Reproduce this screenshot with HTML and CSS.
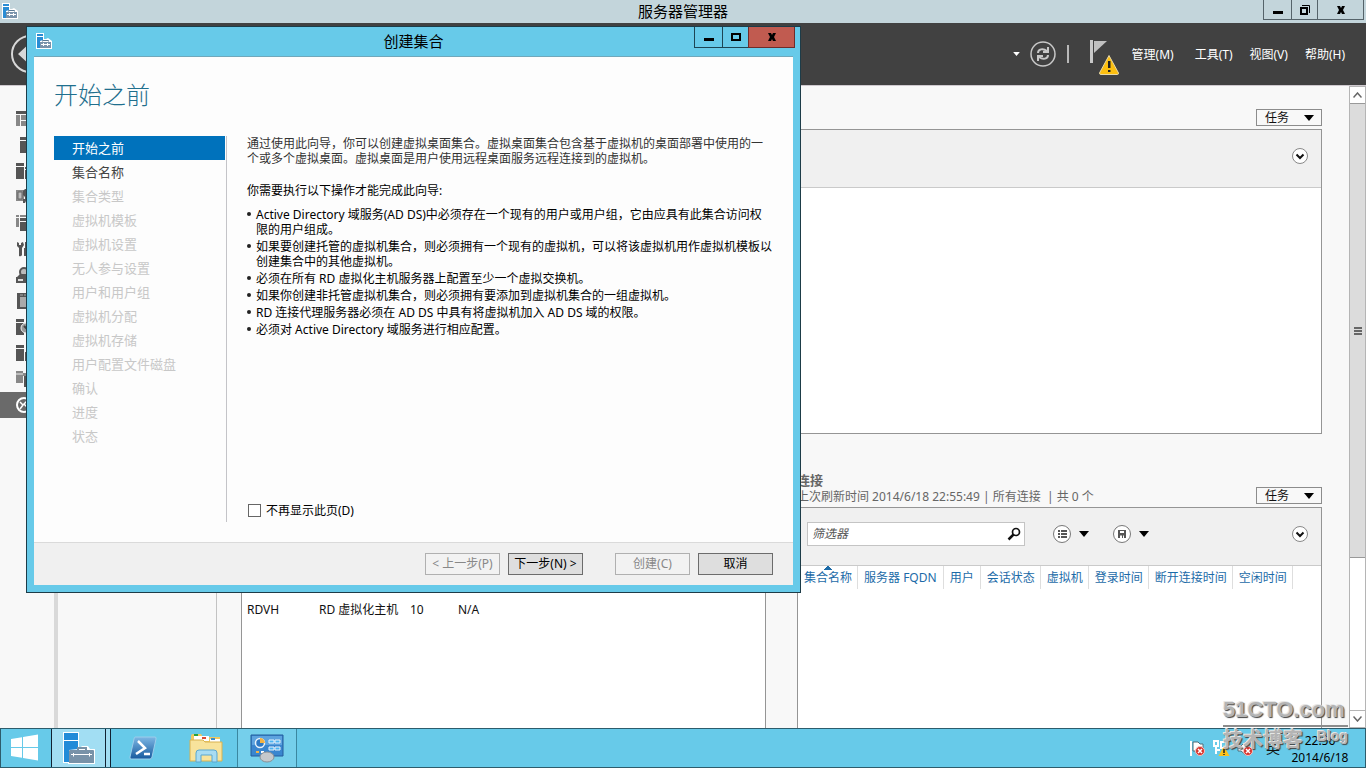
FILE: index.html
```html
<!DOCTYPE html>
<html lang="zh-CN">
<head>
<meta charset="utf-8">
<title>服务器管理器</title>
<link rel="stylesheet" href="styles.css">
</head>
<body>
<svg width="0" height="0" class="defs" aria-hidden="true">
  <symbol id="i-server" viewBox="0 0 16 16">
    <path d="M0 0H8V6H10L12 5L16 8V16H0Z" fill="#fff"/>
    <path d="M1 1H7V3H1ZM1 4H7V7L4 8V15H1Z" fill="#2a8dd4"/>
    <path d="M4 9H15V15H4Z" fill="#7a93ab"/>
    <path d="M6.500 8.500V7.500H12.500V8.500" stroke="#5c7b96" fill="none"/>
    <path d="M5 11.500H14M7.500 10V13M11.500 10V13" stroke="#fff" fill="none"/>
  </symbol>
  <symbol id="i-min" viewBox="0 0 12 12"><path d="M1 7H11V10H1Z"/></symbol>
  <symbol id="i-close" viewBox="0 0 12 12"><path d="M2 2H5L6 4L7 2H10L8 6L10 10H7L6 8L5 10H2L4 6Z"/></symbol>
  <symbol id="i-caret" viewBox="0 0 10 6"><path d="M0 0H10L5 6Z"/></symbol>
  <symbol id="i-expand" viewBox="0 0 16 16"><circle cx="8" cy="8" r="7.500" fill="#fff" stroke="#888"/><path d="M4.500 6.500L8 10L11.500 6.500" fill="none" stroke="#111" stroke-width="2"/></symbol>
  <symbol id="i-error" viewBox="0 0 10 10"><circle cx="5" cy="5" r="4.500" fill="#d8322c" stroke="#f4c4c0"/><path d="M3 3L7 7M7 3L3 7" stroke="#fff" stroke-width="1.500"/></symbol>
</svg>

<header class="titlebar">
  <svg class="app-icon" width="16" height="16"><use href="#i-server"/></svg>
  <h1 class="window-title">服务器管理器</h1>
  <div class="window-buttons">
    <button class="wb wb-min" aria-label="最小化"><svg width="12" height="12"><use href="#i-min"/></svg></button>
    <button class="wb wb-max" aria-label="还原"><svg width="12" height="12" viewBox="0 0 12 12" fill="none" stroke="#000"><path d="M2 4H8V10H2Z" stroke-width="2"/><path d="M3 1.500H10.500V9"/></svg></button>
    <button class="wb wb-close" aria-label="关闭"><svg width="12" height="12"><use href="#i-close"/></svg></button>
  </div>
</header>

<div class="commandbar">
  <button class="back" aria-label="后退"><svg width="38" height="38" viewBox="0 0 38 38"><circle cx="19" cy="19" r="18" fill="none" stroke="#d8d8d8" stroke-width="2"/><path d="M7 19L20 7V15H30V23H20V31Z" fill="#d8d8d8"/></svg></button>
  <div class="command-tools">
    <svg class="white-caret" width="7" height="4"><use href="#i-caret"/></svg>
    <button class="tool" aria-label="刷新"><svg width="26" height="26" viewBox="0 0 26 26" fill="none" stroke="#c8c8c8"><circle cx="13" cy="13" r="12" stroke-width="1.500"/><path d="M8 12C8 8 13 7 17 10M18 14C18 18 13 19 9 16" stroke-width="2"/><path d="M18 6V11H13M8 20V15H13" stroke-width="2"/></svg></button>
    <span class="divider"></span>
    <button class="tool flag" aria-label="通知"><svg width="30" height="36" viewBox="0 0 30 36"><path d="M1 1H4V24H1Z" fill="#c8c8c8"/><path d="M5 2H18L5 14Z" fill="#c0c0c0"/><path d="M20 16.500L29.500 34Q29.500 35.500 28.500 35.500H12Q10.500 35.500 10.500 34Z" fill="#fcbf10" stroke="#e8d9a8"/><path d="M19 22H21.500V29H19ZM19 31H21.500V33H19Z" fill="#222"/></svg></button>
  </div>
  <nav class="menu">
    <button>管理(M)</button>
    <button>工具(T)</button>
    <button>视图(V)</button>
    <button>帮助(H)</button>
  </nav>
</div>

<div class="workspace">
  <nav class="rail" aria-label="服务器角色">
    <button><svg width="16" height="16" viewBox="0 0 16 16"><path d="M0 0H16V3H0Z"/><path d="M0 4H4V15H0ZM5 4H16V9H5ZM5 10H16V15H5Z" fill="#888"/></svg></button>
    <button><svg width="16" height="16" viewBox="0 0 16 16"><path d="M4 0H14V3H4ZM4 4H14V16H4Z"/></svg></button>
    <button><svg width="16" height="16" viewBox="0 0 16 16"><path d="M0 0H8V3H0ZM0 4H8V16H0ZM9 4H16V6H9ZM9 7H16V16H9Z"/></svg></button>
    <button><svg width="16" height="16" viewBox="0 0 16 16"><path d="M0 1H8V12H0Z" fill="#888"/><path d="M2 3H6V10H2Z" fill="#bbb" stroke="#666"/><path d="M9 0H14V8L16 12H10L9 14H7V10H9V8L7 6V2Z"/></svg></button>
    <button><svg width="16" height="16" viewBox="0 0 16 16"><path d="M0 0H3V2H0ZM4 0H10V2H4ZM0 3H3V12H0Z" fill="#888"/><path d="M4 3H14V6H4ZM4 7H14V16H4Z"/></svg></button>
    <button><svg width="16" height="16" viewBox="0 0 16 16"><path d="M1 1L3 2V4H5V2L7 1L8 4L6 7V14Q5 16 3 15V7L1 5ZM9 1H11V7H12V15H8V7H9Z"/></svg></button>
    <button><svg width="16" height="16" viewBox="0 0 16 16"><circle cx="8" cy="5" r="4" fill="#bbb" stroke="#555" stroke-width="2"/><path d="M4 7L1 10H15L12 7ZM0 10H16V16H0Z"/><path d="M2 13H7" stroke="#ddd" stroke-width="2"/></svg></button>
    <button><svg width="16" height="16" viewBox="0 0 16 16"><path d="M1 0H16V16H1Z"/><path d="M4 2H7M8 2H14" stroke="#aaa"/><path d="M4 4H12V14H4Z" fill="#aaa"/></svg></button>
    <button><svg width="16" height="16" viewBox="0 0 16 16"><path d="M0 0H8V3H0ZM0 4H8V16H0Z"/><circle cx="10" cy="9" r="5" fill="#999" stroke="#eee"/><path d="M8 7L12 11" stroke="#444" stroke-width="2"/></svg></button>
    <button><svg width="16" height="16" viewBox="0 0 16 16"><path d="M0 0H8V3H0ZM0 4H8V16H0ZM9 7H16V16H9Z"/></svg></button>
    <button><svg width="16" height="16" viewBox="0 0 16 16"><path d="M0 0H7V2H10V5H7V12H0Z" fill="#888"/><path d="M8 5H16V16H8Z"/><path d="M0 3H7" stroke="#eee"/></svg></button>
    <button class="current"><svg width="16" height="16" viewBox="0 0 16 16" fill="none" stroke="#fff"><circle cx="8" cy="8" r="7" stroke-width="2"/><path d="M4 5L7 8L4 12M11 4L8 7L11 10" stroke-width="1.500"/></svg></button>
  </nav>
  <nav class="subnav" aria-label="远程桌面服务"></nav>

  <main class="main">
    <div class="section-head top-head">
      <button class="tasks">任务<svg width="10" height="6"><use href="#i-caret"/></svg></button>
    </div>
    <section class="panel overview">
      <div class="panel-head"><button class="expand" aria-label="展开"><svg width="16" height="16"><use href="#i-expand"/></svg></button></div>
    </section>

    <div class="columns">
      <section class="column">
        <div class="section-head"></div>
        <div class="panel open">
          <div class="panel-head"></div>
          <table class="hosts">
            <tr><td>RDVH</td><td>RD 虚拟化主机</td><td>10</td><td>N/A</td></tr>
          </table>
        </div>
      </section>
      <section class="column">
        <div class="section-head">
          <div>
            <h2 class="section-title">连接</h2>
            <p class="section-sub">上次刷新时间 2014/6/18 22:55:49 | 所有连接&nbsp; | 共 0 个</p>
          </div>
          <button class="tasks">任务<svg width="10" height="6"><use href="#i-caret"/></svg></button>
        </div>
        <div class="panel open">
          <div class="panel-head">
            <label class="filter">
              <input type="text" placeholder="筛选器" aria-label="筛选器">
              <svg width="14" height="14" viewBox="0 0 14 14" fill="none" stroke="#111"><circle cx="9" cy="5" r="3.500" stroke-width="1.700"/><path d="M6.500 7.500L1.500 12.500" stroke-width="2.500"/></svg>
            </label>
            <button class="split" aria-label="查询条件"><svg width="18" height="18" viewBox="0 0 18 18"><circle cx="9" cy="9" r="8.500" fill="#fff" stroke="#777"/><path d="M5 5H7V7H5ZM8 5H14V7H8ZM5 8H7V10H5ZM8 8H14V10H8ZM5 11H7V13H5ZM8 11H14V13H8Z" fill="#555"/></svg><svg width="10" height="6"><use href="#i-caret"/></svg></button>
            <button class="split" aria-label="保存查询"><svg width="18" height="18" viewBox="0 0 18 18"><circle cx="9" cy="9" r="8.500" fill="#fff" stroke="#777"/><path d="M5 5H13V13H5Z" fill="#555"/><path d="M7 6H11V8H7ZM7 10.500H9V13H7ZM10 10.500H11V13H10Z" fill="#fff"/></svg><svg width="10" height="6"><use href="#i-caret"/></svg></button>
            <button class="expand" aria-label="展开"><svg width="16" height="16"><use href="#i-expand"/></svg></button>
          </div>
          <table class="connections">
            <tr><th class="sorted">集合名称</th><th class="wide">服务器 FQDN</th><th class="wide">用户</th><th>会话状态</th><th>虚拟机</th><th>登录时间</th><th>断开连接时间</th><th>空闲时间</th></tr>
          </table>
        </div>
      </section>
    </div>
  </main>

  <div class="scrollbar">
    <button class="arrow" aria-label="向上滚动"><svg width="9" height="6" viewBox="0 0 9 6"><path d="M.5 5.500L4.500 1L8.500 5.500" fill="none" stroke="#666" stroke-width="1.500"/></svg></button>
    <div class="thumb"><span class="grip"></span></div>
    <div class="track"></div>
    <button class="arrow" aria-label="向下滚动"><svg width="9" height="6" viewBox="0 0 9 6"><path d="M.5 .5L4.500 5L8.500 .5" fill="none" stroke="#666" stroke-width="1.500"/></svg></button>
  </div>
</div>

<footer class="taskbar">
  <button class="task start" aria-label="开始"><svg width="28" height="28" viewBox="0 0 28 28" fill="#fff"><path d="M0 5L11 3.200V13H0ZM12 3L27 .5V13H12ZM0 14H11V23.800L0 22ZM12 14H27V26.500L12 24Z"/></svg></button>
  <button class="task active" aria-label="服务器管理器"><svg width="32" height="32" viewBox="0 0 32 32"><path d="M0 0H16V16H17L19 14H25L27 17H32V32H5V31H0Z" fill="#fff"/><path d="M1 1H15V8H1ZM1 9H15V17L6 18V30H1Z" fill="#218bd8"/><path d="M6 19Q6 18 7 18H30Q31 18 31 19V31H6Z" fill="#7892a8"/><path d="M15 18V16H23V18" fill="none" stroke="#7892a8" stroke-width="2"/><path d="M8 22.500H29M10.500 21V24.500M26.500 21V24.500" stroke="#fff"/></svg></button>
  <span class="stack"></span>
  <button class="task shell" aria-label="PowerShell"><svg width="28" height="24" viewBox="0 0 28 24"><defs><linearGradient id="g1" x2="0" y2="1"><stop stop-color="#7db7e4"/><stop offset="1" stop-color="#175a9e"/></linearGradient></defs><path d="M6 1H26Q27.500 1 27 3L23 21Q22.500 23 21 23H2Q.5 23 1 21L5 3Q5.300 1 6 1Z" fill="url(#g1)" stroke="#9ccdea"/><path d="M9 5L16 12L7 18M15 18H21" fill="none" stroke="#fff" stroke-width="2.500"/></svg></button>
  <button class="task" aria-label="文件资源管理器"><svg width="34" height="30" viewBox="0 0 34 30"><path d="M2 3Q2 1 4 1H12L14 4H31V26H2Z" fill="#eec963"/><path d="M5 3H20V8H5ZM21 6H31V10H21Z" fill="#fff"/><path d="M5 1H9V3H5Z" fill="#29a13a"/><path d="M13 4H17V6H13Z" fill="#d94b36"/><path d="M22 5H26V7H22Z" fill="#3c8ccc"/><path d="M1 7H14L16 9H33V28H1Z" fill="#f8e39b" stroke="#d8b250"/><path d="M7 29V20Q7 17 10 17H25Q28 17 28 20V29H23V22H12V29Z" fill="#a8dcf2" stroke="#5ba7d0"/></svg></button>
  <button class="task running" aria-label="控制面板"><svg width="34" height="30" viewBox="0 0 34 30"><path d="M1 2H33V23H1Z" fill="#3a86cf" stroke="#245d9c"/><path d="M2 3H32V12H2Z" fill="#5da3df"/><circle cx="10" cy="10" r="4.500" fill="#2e79c4" stroke="#e8f2fa" stroke-width="1.500"/><path d="M10 10V5A5 5 0 0 1 15 10Z" fill="#f5b342"/><path d="M19 7H24V10H19ZM25 7H30V10H25ZM19 14H24V17H19ZM25 14H30V17H25Z" fill="#4db4f2" stroke="#e8f2fa"/><path d="M6 18H9V20H6Z" fill="#f5b342"/><path d="M11 18H14V20H11Z" fill="#fff"/><ellipse cx="17" cy="24" rx="7" ry="5" fill="#c6c9cc" stroke="#8c9094"/></svg></button>
  <div class="tray">
    <svg width="17" height="17" viewBox="0 0 17 17"><path d="M2 1V16" stroke="#fff" stroke-width="2"/><path d="M4 2H9L11 4H14V11H4Z" fill="#fff" stroke="#4f6c78"/><use href="#i-error" x="6" y="6" width="10" height="10"/></svg>
    <svg width="17" height="17" viewBox="0 0 17 17"><path d="M1 1H5V6H1ZM3 6V14M3 10H7M8 2H15V8H8Z" fill="none" stroke="#fff" stroke-width="2"/><path d="M11 6L16.500 16H5.500Z" fill="#fcc21b"/><path d="M11 9V13M11 14V15" stroke="#222" stroke-width="1.500"/></svg>
    <svg width="17" height="17" viewBox="0 0 17 17"><path d="M1 6H4L9 1V15L4 11H1Z" fill="#fff" stroke="#4f6c78"/><use href="#i-error" x="6" y="6" width="10" height="10"/></svg>
    <span class="ime">英</span>
    <div class="clock"><span>22:56</span><span>2014/6/18</span></div>
  </div>
</footer>

<div class="watermark" aria-hidden="true">
  <div class="wm-site">51CTO.com</div>
  <div class="wm-row"><span class="wm-cn">技术博客</span><span class="wm-blog">Blog</span></div>
</div>

<div class="dialog" role="dialog" aria-label="创建集合">
  <div class="dialog-bar">
    <svg class="dialog-icon" width="16" height="16"><use href="#i-server"/></svg>
    <h2 class="window-title">创建集合</h2>
    <div class="window-buttons">
      <button class="wb wb-min" aria-label="最小化"><svg width="12" height="12"><use href="#i-min"/></svg></button>
      <button class="wb wb-max" aria-label="最大化"><svg width="12" height="12" viewBox="0 0 12 12"><path d="M2 3H10V9H2Z" fill="none" stroke="#000" stroke-width="2"/></svg></button>
      <button class="wb wb-close" aria-label="关闭"><svg width="12" height="12"><use href="#i-close"/></svg></button>
    </div>
  </div>
  <div class="dialog-client">
    <h3 class="step-title">开始之前</h3>
    <div class="wizard">
      <ol class="steps">
        <li class="selected">开始之前</li>
        <li class="available">集合名称</li>
        <li>集合类型</li>
        <li>虚拟机模板</li>
        <li>虚拟机设置</li>
        <li>无人参与设置</li>
        <li>用户和用户组</li>
        <li>虚拟机分配</li>
        <li>虚拟机存储</li>
        <li>用户配置文件磁盘</li>
        <li>确认</li>
        <li>进度</li>
        <li>状态</li>
      </ol>
      <div class="step-body">
        <p class="intro">通过使用此向导，你可以创建虚拟桌面集合。虚拟桌面集合包含基于虚拟机的桌面部署中使用的一个或多个虚拟桌面。虚拟桌面是用户使用远程桌面服务远程连接到的虚拟机。</p>
        <p class="lead">你需要执行以下操作才能完成此向导:</p>
        <ul class="notes">
          <li>Active Directory 域服务(AD DS)中必须存在一个现有的用户或用户组，它由应具有此集合访问权限的用户组成。</li>
          <li>如果要创建托管的虚拟机集合，则必须拥有一个现有的虚拟机，可以将该虚拟机用作虚拟机模板以创建集合中的其他虚拟机。</li>
          <li>必须在所有 RD 虚拟化主机服务器上配置至少一个虚拟交换机。</li>
          <li>如果你创建非托管虚拟机集合，则必须拥有要添加到虚拟机集合的一组虚拟机。</li>
          <li>RD 连接代理服务器必须在 AD DS 中具有将虚拟机加入 AD DS 域的权限。</li>
          <li>必须对 Active Directory 域服务进行相应配置。</li>
        </ul>
        <label class="skip"><input type="checkbox">不再显示此页(D)</label>
      </div>
    </div>
    <div class="dialog-footer">
      <button class="push" disabled>&lt; 上一步(P)</button>
      <button class="push">下一步(N) &gt;</button>
      <button class="push apart" disabled>创建(C)</button>
      <button class="push">取消</button>
    </div>
  </div>
</div>
</body>
</html>
```
FILE: styles.css
```css
* { box-sizing: border-box; }

body {
  margin: 0;
  height: 100vh;
  display: flex;
  flex-direction: column;
  overflow: hidden;
  position: relative;
  background: #f8f8f8;
  color: #111;
  font: 12px/16px "Noto Sans", "Noto Sans CJK SC", sans-serif;
}

h1, h2, h3, p, ul, ol { margin: 0; padding: 0; }
ul, ol { list-style: none; }
svg { display: block; flex: none; }
.defs { position: absolute; }

button {
  font: inherit;
  color: inherit;
  background: none;
  border: 0;
  padding: 0;
}

/* Window frame */
.titlebar, .dialog-bar {
  display: grid;
  grid-template-columns: 1fr auto 1fr;
  flex: none;
}
.titlebar { height: 23px; background: #c3d5db; }
.app-icon { margin: 3px 2px; }
.window-title {
  font-size: 15px;
  font-weight: 400;
  line-height: 22px;
  color: #000;
}
.window-buttons { display: flex; justify-self: end; height: 21px; }
.titlebar .window-buttons { margin-right: 2px; height: 20px; }
.wb {
  display: flex;
  align-items: center;
  justify-content: center;
  border: 1px solid #55636a;
  border-top: 0;
  margin-left: -1px;
}
.wb-min { width: 29px; }
.wb-max { width: 27px; }
.wb-close { width: 47px; }

/* Command bar */
.commandbar {
  height: 62px;
  flex: none;
  display: flex;
  align-items: center;
  background: #414141;
  color: #fff;
  padding: 0 21px 0 11px;
}
.command-tools { margin-left: auto; display: flex; align-items: center; }
.white-caret { fill: #fff; margin-right: 10px; }
.divider { width: 2px; height: 18px; background: #b8b8b8; margin: 0 20px 0 11px; }
.flag { padding-top: 6px; margin-right: 13px; }
.menu { display: flex; gap: 17px; padding-top: 1px; }
.menu button:first-child { margin-right: 4px; }

/* Workspace */
.workspace {
  flex: 1;
  min-height: 0;
  display: flex;
  border-top: 1px solid #cfc9cf;
}
.rail { width: 54px; padding-top: 20px; flex: none; }
.rail button {
  display: flex;
  align-items: center;
  width: 100%;
  height: 26px;
  padding-left: 16px;
  fill: #555;
}
.rail .current { background: #6a6a6a; }
.subnav {
  width: 163px;
  flex: none;
  border-left: 4px solid #d9d9d9;
  border-right: 1px solid #c3c3c3;
}
.main {
  flex: 1;
  min-width: 0;
  display: flex;
  flex-direction: column;
  padding: 0 27px 0 24px;
}
.section-head {
  display: flex;
  justify-content: space-between;
  align-items: flex-end;
  height: 73px;
  padding-bottom: 3px;
  flex: none;
}
.top-head { height: 43px; justify-content: flex-end; }
.tasks {
  display: flex;
  align-items: center;
  justify-content: space-between;
  width: 66px;
  height: 17px;
  padding: 0 7px 0 8px;
  border: 1px solid #8c8c8c;
  line-height: 15px;
}
.panel { background: #fff; border: 1px solid #959595; }
.panel-head {
  display: flex;
  align-items: center;
  height: 58px;
  padding: 0 13px 5px 9px;
  background: #f0f0f0;
  border-bottom: 1px solid #cacaca;
}
.expand { margin-left: auto; }
.overview { height: 305px; flex: none; }
.columns {
  flex: 1;
  min-height: 0;
  display: grid;
  grid-template-columns: 1fr 1fr;
  gap: 31px;
}
.column { display: flex; flex-direction: column; min-width: 0; }
.open { flex: 1; border-bottom: 0; }
.section-title { font-size: 13px; line-height: 17px; color: #666; }
.section-sub { color: #666; white-space: pre; line-height: 15px; }

.filter {
  display: flex;
  align-items: center;
  width: 218px;
  height: 24px;
  padding: 0 3px 0 4px;
  background: #fff;
  border: 1px solid #c4c4c4;
  margin-right: 28px;
}
.filter input {
  flex: 1;
  min-width: 0;
  border: 0;
  padding: 0;
  outline: 0;
  background: none;
  font: inherit;
  font-style: italic;
}
.filter input::placeholder { color: #555; opacity: 1; }
.split { display: flex; align-items: center; gap: 8px; margin-right: 24px; }

table { border-collapse: collapse; }
th, td { text-align: left; font-weight: 400; white-space: nowrap; }
.connections th {
  height: 23px;
  padding: 0 5px 0 6px;
  color: #1c6ba8;
  border-right: 1px solid #dedede;
}
.connections .wide { padding-right: 6px; }
.connections .sorted {
  background: linear-gradient(#1c6ba8, #1c6ba8) 50% 3px / 8px 1px no-repeat,
              linear-gradient(#1c6ba8, #1c6ba8) 50% 2px / 6px 1px no-repeat,
              linear-gradient(#1c6ba8, #1c6ba8) 50% 1px / 4px 1px no-repeat,
              linear-gradient(#1c6ba8, #1c6ba8) 50% 0 / 2px 1px no-repeat;
}
.hosts td { padding: 36px 10px 6px 0; }
.hosts td:first-child { padding-left: 5px; width: 77px; }
.hosts td:nth-child(2) { width: 91px; }
.hosts td:nth-child(3) { width: 48px; }

/* Scroll bar */
.scrollbar {
  width: 17px;
  flex: none;
  display: flex;
  flex-direction: column;
  background: #fff;
  border: 1px solid #b5b5b5;
}
.arrow { display: flex; align-items: center; justify-content: center; height: 16px; flex: none; }
.thumb {
  flex: 456;
  display: flex;
  align-items: center;
  justify-content: center;
  background: #dcdcdc;
  border: solid #999;
  border-width: 1px 0;
}
.grip { width: 8px; height: 8px; background: repeating-linear-gradient(#666 0 2px, transparent 2px 3px); }
.track { flex: 153; border-bottom: 1px solid #b5b5b5; }

/* Taskbar */
.taskbar {
  height: 40px;
  flex: none;
  display: flex;
  background: #67cae9;
  border: 1px solid #2d5c6c;
}
.task { width: 62px; display: flex; align-items: center; justify-content: center; }
.start { width: 50px; padding-right: 2px; }
.active { width: 55px; background: #a2def3; border: solid #123; border-width: 0 1px; }
.stack { width: 5px; background: #a2def3; border-right: 1px solid #123; }
.shell { width: 64px; }
.running { width: 60px; border: solid #3b87a0; border-width: 0 1px; background: #75cfeb; }
.tray { margin-left: auto; display: flex; align-items: center; gap: 7px; padding-right: 15px; }
.ime { font-size: 14px; margin: 0 3px 0 5px; }
.clock { display: flex; flex-direction: column; align-items: center; min-width: 60px; line-height: 17px; padding-top: 1px; color: #000; }

/* Site mark over the corner */
.watermark {
  position: absolute;
  right: 18px;
  bottom: 13px;
  z-index: 3;
  width: 125px;
  color: #b4b4b4;
  font-weight: 700;
  text-shadow: -1px -1px 0 #e6e6e6, 1px 1px 1px #444;
}
.wm-site {
  font: 700 22px/30px "Liberation Sans", sans-serif;
  border-bottom: 2px solid #8c8c8c;
}
.wm-row { display: flex; justify-content: space-between; height: 28px; }
.wm-cn { font-size: 20px; line-height: 26px; }
.wm-blog { font: 700 14px/18px "Liberation Sans", sans-serif; }

/* Wizard window */
.dialog {
  position: absolute;
  left: 26px;
  top: 26px;
  z-index: 2;
  width: 775px;
  height: 567px;
  display: flex;
  flex-direction: column;
  background: #67cae9;
  border: 1px solid #1d3c48;
  padding: 0 7px 7px;
}
.dialog-bar { height: 29px; }
.dialog-bar .window-title { line-height: 28px; }
.dialog-bar .window-buttons { margin-right: -2px; }
.dialog-icon { margin: 6px 2px; }
.dialog-bar .wb { border-color: #1d4554; }
.dialog-bar .wb-close { background: #c15b50; border-color: #6e2c2a; }
.dialog-client {
  flex: 1;
  min-height: 0;
  display: flex;
  flex-direction: column;
  background: #fdfdfd;
  border-top: 1px solid #70a8bb;
}
.step-title {
  padding: 20px 20px 0;
  font-size: 24px;
  line-height: 36px;
  font-weight: 300;
  color: #1f6f8e;
}
.wizard { flex: 1; min-height: 0; display: flex; padding: 23px 20px 20px; }
.steps {
  width: 173px;
  flex: none;
  padding-right: 1px;
  border-right: 1px solid #c4c4c8;
  font-size: 13px;
  line-height: 24px;
  color: #c8c8c8;
}
.steps li { padding-left: 18px; }
.steps .available { color: #444; }
.steps .selected { background: #0072bc; color: #fff; }
.step-body {
  flex: 1;
  display: flex;
  flex-direction: column;
  padding-left: 20px;
  line-height: 15px;
  color: #000;
}
.intro { color: #333; padding-right: 8px; }
.lead { margin: 17px 0 9px; }
.notes { display: flex; flex-direction: column; gap: 2px; }
.notes li { padding-left: 9px; position: relative; }
.notes li::before {
  content: "";
  position: absolute;
  left: 0;
  top: 5px;
  width: 4px;
  height: 4px;
  border-radius: 50%;
  background: #222;
}
.skip { display: flex; align-items: center; gap: 5px; margin-top: auto; padding-left: 1px; height: 23px; }
.skip input {
  appearance: none;
  width: 13px;
  height: 13px;
  margin: 0;
  border: 1px solid #666;
  background: #fff;
}
.dialog-footer {
  height: 43px;
  flex: none;
  display: flex;
  justify-content: flex-end;
  align-items: center;
  gap: 8px;
  padding-right: 20px;
  background: #f0f0f0;
  border-top: 1px solid #dadada;
}
.push {
  width: 75px;
  height: 22px;
  line-height: 20px;
  white-space: nowrap;
  color: #000;
  background: #dedede;
  border: 1px solid #6c6c6c;
}
.push:disabled { color: #888; background: #f2f2f2; border-color: #b0b0b0; }
.apart { margin-left: 24px; }
```
